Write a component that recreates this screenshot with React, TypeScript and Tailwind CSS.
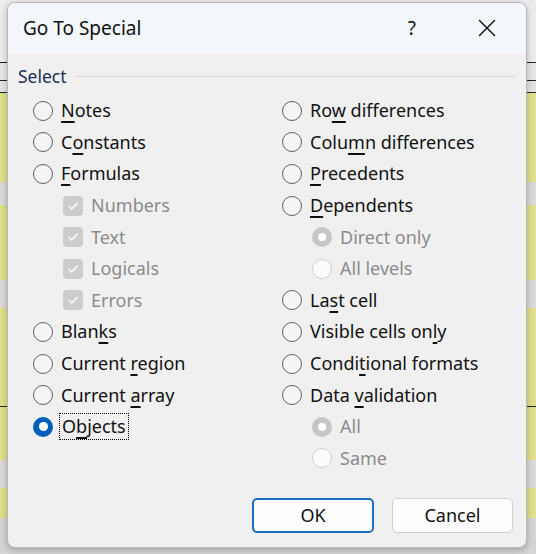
import React from "react";

type Item = {
  label: string;
  u?: number; // index of underlined char
  kind: "radio" | "check" | "subradio";
  checked?: boolean;
  disabled?: boolean;
  focus?: boolean;
};

const left: Item[] = [
  { label: "Notes", u: 0, kind: "radio" },
  { label: "Constants", u: 1, kind: "radio" },
  { label: "Formulas", u: 0, kind: "radio" },
  { label: "Numbers", kind: "check", checked: true, disabled: true },
  { label: "Text", kind: "check", checked: true, disabled: true },
  { label: "Logicals", kind: "check", checked: true, disabled: true },
  { label: "Errors", kind: "check", checked: true, disabled: true },
  { label: "Blanks", u: 4, kind: "radio" },
  { label: "Current region", u: 8, kind: "radio" },
  { label: "Current array", u: 8, kind: "radio" },
  { label: "Objects", u: 1, kind: "radio", checked: true, focus: true },
];

const right: Item[] = [
  { label: "Row differences", u: 2, kind: "radio" },
  { label: "Column differences", u: 4, kind: "radio" },
  { label: "Precedents", u: 0, kind: "radio" },
  { label: "Dependents", u: 0, kind: "radio" },
  { label: "Direct only", kind: "subradio", checked: true, disabled: true },
  { label: "All levels", kind: "subradio", disabled: true },
  { label: "Last cell", u: 2, kind: "radio" },
  { label: "Visible cells only", u: 16, kind: "radio" },
  { label: "Conditional formats", u: 5, kind: "radio" },
  { label: "Data validation", u: 5, kind: "radio" },
  { label: "All", kind: "subradio", checked: true, disabled: true },
  { label: "Same", kind: "subradio", disabled: true },
];

function Label({ text, u }: { text: string; u?: number }) {
  if (u === undefined) return <>{text}</>;
  return (
    <>
      {text.slice(0, u)}
      <span className="underline underline-offset-[4px] decoration-[1.5px]">{text[u]}</span>
      {text.slice(u + 1)}
    </>
  );
}

function Control({ item }: { item: Item }) {
  if (item.kind === "check") {
    return (
      <span className="w-[20px] h-[20px] rounded-[4px] bg-[#cccccc] flex items-center justify-center shrink-0">
        <svg width="12" height="12" viewBox="0 0 12 12" fill="none">
          <path d="M2 6.3 L4.8 9 L10 3.2" stroke="#ffffff" strokeWidth="1.3" strokeLinecap="round" strokeLinejoin="round" />
        </svg>
      </span>
    );
  }
  if (item.disabled) {
    if (item.checked) {
      return (
        <span className="w-[20px] h-[20px] rounded-full bg-[#c6c6c6] flex items-center justify-center shrink-0">
          <span className="w-[8px] h-[8px] rounded-full bg-white" />
        </span>
      );
    }
    return <span className="w-[20px] h-[20px] rounded-full border border-[#cfcfcf] bg-[#fbfbfb] shrink-0" />;
  }
  if (item.checked) {
    return (
      <span className="w-[20px] h-[20px] rounded-full bg-[#005fb8] flex items-center justify-center shrink-0">
        <span className="w-[9px] h-[9px] rounded-full bg-white" />
      </span>
    );
  }
  return <span className="w-[20px] h-[20px] rounded-full border-[1.5px] border-[#5f5f5f] bg-[#f5f5f5] shrink-0" />;
}

function Row({ item }: { item: Item }) {
  const sub = item.kind !== "radio";
  return (
    <div className={`h-[31.6px] flex items-center ${sub ? "pl-[30px]" : ""}`}>
      <Control item={item} />
      <span
        className={`ml-[8px] leading-[23px] whitespace-nowrap ${item.disabled ? "text-[#8b8b8b]" : "text-[#111111]"} ${
          item.focus ? "outline outline-1 outline-dotted outline-black outline-offset-[1px] px-[1px]" : ""
        }`}
      >
        <Label text={item.label} u={item.u} />
      </span>
    </div>
  );
}

const stripes: { h: number; c: string }[] = [
  { h: 62, c: "bg-[#ececec]" },
  { h: 1, c: "bg-[#222222]" },
  { h: 17, c: "bg-[#e6e6e6]" },
  { h: 1, c: "bg-[#222222]" },
  { h: 11, c: "bg-[#e3e3e3]" },
  { h: 1, c: "bg-[#222222]" },
  { h: 89, c: "bg-[#e0df8c]" },
  { h: 23, c: "bg-[#d9d9d9]" },
  { h: 75, c: "bg-[#e0df8c]" },
  { h: 28, c: "bg-[#d9d9d9]" },
  { h: 98, c: "bg-[#e0df8c]" },
  { h: 1, c: "bg-[#222222]" },
  { h: 53, c: "bg-[#e0df8c]" },
  { h: 28, c: "bg-[#d9d9d9]" },
  { h: 30, c: "bg-[#e0df8c]" },
  { h: 36, c: "bg-[#d4d4d4]" },
];

export default function App() {
  return (
    <div
      className="relative w-[536px] h-[554px] overflow-hidden"
      style={{ fontFamily: '"Noto Sans", "Open Sans", sans-serif' }}
    >
      <div className="flex flex-col w-full">
        {stripes.map((s, i) => (
          <div key={i} className={s.c} style={{ height: s.h }} />
        ))}
      </div>

      <div className="absolute left-[7px] top-[2px] w-[520px] h-[546px] rounded-[8px] border border-[#b9b9b9] bg-[#f0f0f0] shadow-[0_2px_6px_rgba(0,0,0,0.25)] overflow-hidden flex flex-col">
        <div className="h-[50px] bg-[#f3f6fb] flex items-center pl-[15px] pr-[30px]">
          <span className="text-[19px] text-[#111111] flex-1">Go To Special</span>
          <span className="text-[19px] text-[#111111] mr-[62px]">?</span>
          <svg width="18" height="18" viewBox="0 0 18 18" fill="none">
            <path d="M1.5 1.5 L16.5 16.5 M16.5 1.5 L1.5 16.5" stroke="#1a1a1a" strokeWidth="1.5" strokeLinecap="round" />
          </svg>
        </div>

        <div className="flex flex-col flex-1 text-[18px]">
          <div className="h-[42px] flex items-center pl-[10px] pr-[10px] pt-[4px]">
            <span className="text-[#1c2f55] text-[17.5px]">Select</span>
            <div className="flex-1 h-px bg-[#d8d8d8] ml-[8px]" />
          </div>

          <div className="flex pl-[25px]">
            <div className="w-[249px] flex flex-col">
              {left.map((it) => (
                <Row key={it.label} item={it} />
              ))}
            </div>
            <div className="flex flex-col">
              {right.map((it) => (
                <Row key={it.label} item={it} />
              ))}
            </div>
          </div>

          <div className="flex justify-end gap-[18px] pr-[13px] mt-auto mb-[14px]">
            <button className="w-[122px] h-[35px] rounded-[5px] border-2 border-[#1a6fc0] bg-[#fdfdfd] text-[#111111] text-[18px]">
              OK
            </button>
            <button className="w-[121px] h-[35px] rounded-[5px] border border-[#d0d0d0] bg-[#fdfdfd] text-[#111111] text-[18px]">
              Cancel
            </button>
          </div>
        </div>
      </div>
    </div>
  );
}
